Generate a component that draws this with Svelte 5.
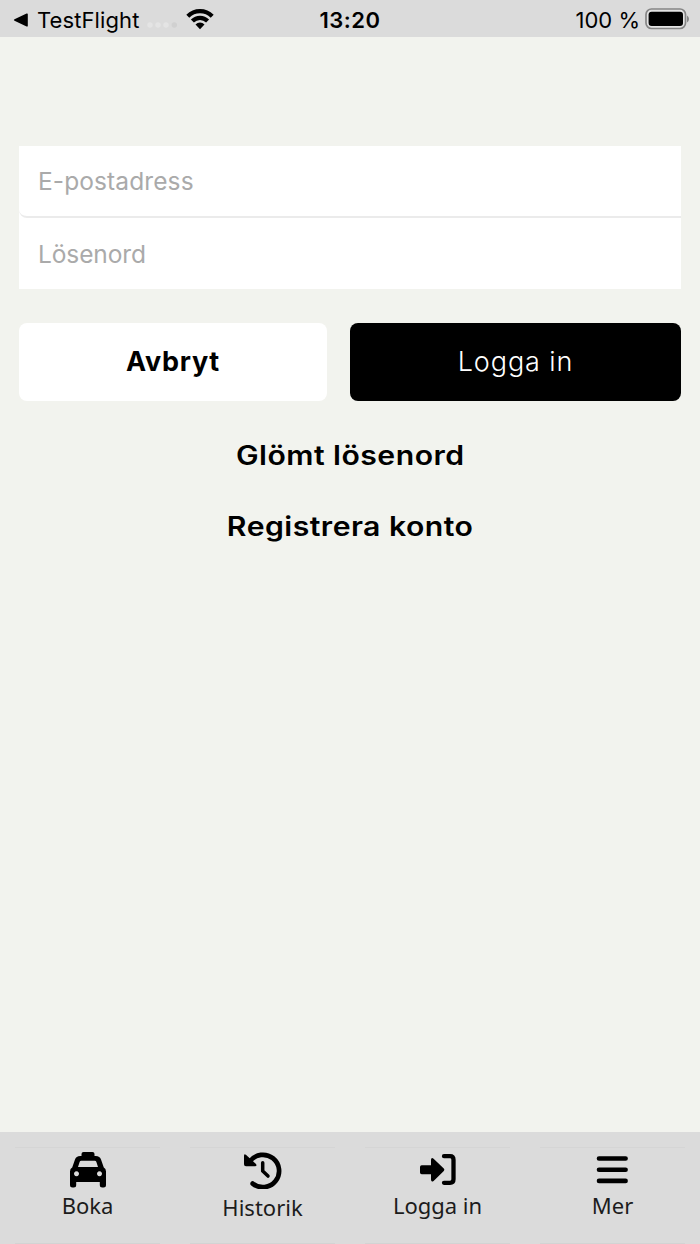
<script>
  let email = '';
  let password = '';
</script>

<style>
  :global(body) {
    background-color: #f2f3ee;
  }

  .screen {
    display: flex;
    flex-direction: column;
    width: 100%;
    height: 1244px;
    background-color: #f2f3ee;
    color: #000;
    font-family: Inter, sans-serif;
  }

  button {
    border: 0;
    padding: 0;
    background: none;
    color: inherit;
    font-family: inherit;
    white-space: nowrap;
  }

  svg {
    display: block;
    flex: none;
  }

  .status-bar {
    display: grid;
    grid-template-columns: 1fr auto 1fr;
    align-items: center;
    box-sizing: border-box;
    height: 37px;
    padding: 2px 11px 0 13px;
    background-color: #dbdbdb;
    font-size: 22px;
    line-height: 34px;
  }

  .status-left,
  .status-right {
    display: flex;
    align-items: center;
  }

  .status-left span {
    margin-left: 9px;
    letter-spacing: 0.1px;
  }

  .signal {
    margin: 11px 9px 0 8px;
  }

  .status-right {
    justify-content: flex-end;
    gap: 5px;
  }

  .battery {
    margin-bottom: 1px;
  }

  .time {
    font-weight: 600;
    letter-spacing: 0.5px;
    transform: translateX(-1px);
  }

  .login {
    flex: 1;
    padding: 109px 19px 0;
  }

  .fields {
    background-color: #fff;
  }

  .fields input {
    display: block;
    box-sizing: border-box;
    width: 100%;
    height: 71px;
    border: 0;
    padding: 0 19px;
    outline: 0;
    background-color: #fff;
    font: 24.5px Inter, sans-serif;
  }

  .fields .email {
    height: 72px;
    border-bottom: 2px solid #ebebeb;
    border-bottom-left-radius: 8px;
    padding-bottom: 1px;
    letter-spacing: 0.1px;
  }

  .fields input::placeholder {
    color: #aaa;
    opacity: 1;
  }

  .password {
    letter-spacing: -0.1px;
  }

  .actions {
    display: grid;
    grid-template-columns: 308px 331px;
    justify-content: space-between;
    margin-top: 34px;
  }

  .actions button {
    height: 78px;
    border-radius: 8px;
    font-size: 27px;
  }

  .actions .cancel {
    background-color: #fff;
    padding-bottom: 2px;
    font-weight: 650;
    letter-spacing: 0.7px;
  }

  .actions .submit {
    background-color: #000;
    color: #fff;
    padding-bottom: 1px;
    font-weight: 300;
    letter-spacing: 0.9px;
  }

  .links {
    display: flex;
    flex-direction: column;
    align-items: center;
    margin-top: 18px;
  }

  /* extended letterforms */
  .links button {
    height: 71px;
    font-size: 26.5px;
    font-weight: 630;
    letter-spacing: 0.4px;
    transform: scaleX(1.14);
  }

  .tab-bar {
    display: grid;
    grid-template-columns: repeat(4, 1fr);
    box-sizing: border-box;
    height: 112px;
    padding-top: 15px;
    background-color: #dbdbdb;
  }

  .tab {
    display: flex;
    flex-direction: column;
    align-items: center;
    justify-content: flex-start;
    margin: 0 15px;
    border-top: 1px solid #d5d5d5;
    border-bottom: 1px solid #d3d3d3;
    padding-top: 3px;
    font-family: "Noto Sans", sans-serif;
    font-size: 22px;
    line-height: 30px;
  }

  .tab span {
    margin-top: 1px;
    color: #1c1c1c;
  }

  .tab .low {
    margin-top: 3px;
  }
</style>

<div class="screen">
  <header class="status-bar">
    <div class="status-left">
      <svg width="15" height="14" viewBox="0 0 15 14"><path d="M1.5 6.2 13.6.5q1.2-.4 1.2.8v11.4q0 1.2-1.200.8L1.500 7.800q-1.400-.8 0-1.600z" /></svg>
      <span>TestFlight</span>
      <svg class="signal" width="30" height="8" viewBox="0 0 30 8">
        <g fill="#e4e4e4">
          <circle cx="3" cy="4" r="2.7" />
          <circle cx="11" cy="4" r="2.7" />
          <circle cx="19" cy="4" r="2.7" />
        </g>
        <circle cx="27.300" cy="4" r="2.7" fill="#d0d0d0" />
      </svg>
      <svg width="28" height="21" viewBox="0 0 28 21">
        <g fill="none" stroke="#000" stroke-width="4.200">
          <path d="M1.800 7.200a17.300 17.300 0 0 1 24.400 0" />
          <path d="M6.400 12.100a10.700 10.700 0 0 1 15.200 0" />
        </g>
        <path d="M9.500 15.500a6.300 6.300 0 0 1 9 0L14 20.200z" />
      </svg>
    </div>
    <div class="time">13:20</div>
    <div class="status-right">
      <div>100 %</div>
      <svg class="battery" width="44" height="22" viewBox="0 0 44 22">
        <rect x="1" y="1" width="39.5" height="19.5" rx="5.5" fill="#e3e3e3" stroke="#858585" stroke-width="1.7" />
        <rect x="3.600" y="3.700" width="34.400" height="14.200" rx="3" />
        <path d="M42 7.500q2 1 2 3.500t-2 3.500z" fill="#858585" />
      </svg>
    </div>
  </header>

  <main class="login">
    <div class="fields">
      <input class="email" type="email" placeholder="E-postadress" bind:value={email} />
      <input class="password" type="password" placeholder="Lösenord" bind:value={password} />
    </div>
    <div class="actions">
      <button class="cancel">Avbryt</button>
      <button class="submit">Logga in</button>
    </div>
    <div class="links">
      <button class="forgot">Glömt lösenord</button>
      <button class="register">Registrera konto</button>
    </div>
  </main>

  <nav class="tab-bar">
    <button class="tab">
      <svg width="38" height="38" viewBox="0 0 38 38">
        <path fill-rule="evenodd" d="M12.500 3q0-2 2-2h9q2 0 2 2v2h1.300q4 0 5.300 3.700l2.700 7.800q2.200 1.200 2.200 4V34q0 2.500-2.500 2.500h-1.200q-2.500 0-2.500-2.500v-3H7.200v3q0 2.500-2.500 2.500H3.500Q1 36.500 1 34V20.500q0-2.800 2.200-4l2.700-7.800Q7.200 5 11.200 5h1.300zM9 16h20l-1.700-5.200q-.4-1-1.500-1H12.200q-1.100 0-1.500 1zM7.500 20.300a2.500 2.500 0 1 0 .01 0zM30.500 20.300a2.500 2.500 0 1 0 .01 0z" />
      </svg>
      <span>Boka</span>
    </button>
    <button class="tab">
      <svg width="40" height="38" viewBox="0 0 40 38">
        <path d="M1 4.800q0-2.600 1.900-1L13 13q1.300 1.900-1 2.200H3Q1 15.200 1 13.200z" />
        <g fill="none" stroke="#000" stroke-linecap="round" stroke-linejoin="round">
          <path d="M7 10.200A16.200 16.200 0 1 1 9.700 32.600" stroke-width="4.700" />
          <path d="M19.700 11.700v8.400l5.300 5" stroke-width="3.500" />
        </g>
      </svg>
      <span class="low">Historik</span>
    </button>
    <button class="tab">
      <svg width="38" height="38" viewBox="0 0 38 38">
        <path d="M1 16q0-1.700 1.700-1.700H12V9q.2-3.200 2.600-1.300l10.200 9.900q1.200 1.200 0 2.400l-10.200 9.900q-2.400 1.900-2.600-1.300v-5.300H2.700Q1 23.300 1 21.600z" />
        <path d="M25 5.200h6q3.500 0 3.500 3.500v19.600q0 3.500-3.500 3.500h-6" fill="none" stroke="#000" stroke-width="4.300" stroke-linecap="round" />
      </svg>
      <span>Logga in</span>
    </button>
    <button class="tab">
      <svg width="38" height="38" viewBox="0 0 38 38">
        <path d="M5 7.500h26.600M5 18.700h26.600M5 29.900h26.600" stroke="#000" stroke-width="4.600" stroke-linecap="round" />
      </svg>
      <span>Mer</span>
    </button>
  </nav>
</div>
